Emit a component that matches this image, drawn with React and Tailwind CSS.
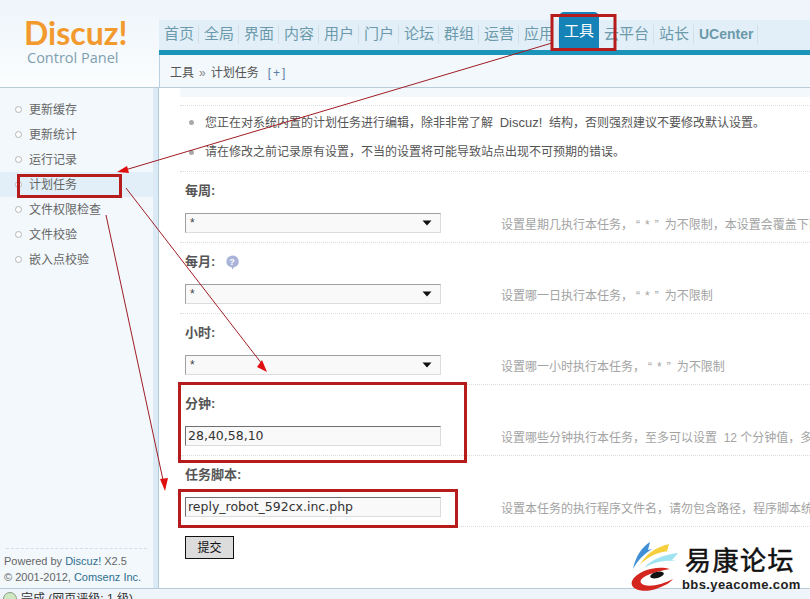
import React from "react";

const cjk = "font-['Liberation_Sans','Noto_Sans_CJK_SC',sans-serif]";

const navItems = ["首页", "全局", "界面", "内容", "用户", "门户", "论坛", "群组", "运营", "应用"];
const sideItems = ["更新缓存", "更新统计", "运行记录", "计划任务", "文件权限检查", "文件校验", "嵌入点校验"];

function Caret() {
  return (
    <svg width="10" height="6" viewBox="0 0 10 6" className="shrink-0">
      <path d="M0.5 0.5h9L5 5.5z" fill="#111" />
    </svg>
  );
}

function Star() {
  return <span className="pl-[3px] pr-[1px] tracking-[5px]">“*”</span>;
}

// fake select / text input, same box for both
function Field({ value, select, dark }) {
  return (
    <div
      className={`flex h-5 w-[256px] shrink-0 items-center justify-between border border-r-[#dcdcdc] border-b-[#dcdcdc] bg-[#f9f9f9] pr-2 ${
        dark
          ? "border-t-[#707070] border-l-[#707070] pl-[2px] pt-[1px] font-['DejaVu_Sans',sans-serif] text-[12.5px] text-[#333]"
          : "border-t-[#a0a0a0] border-l-[#a0a0a0] pl-1 text-xs text-[#444]"
      }`}
    >
      <span>{value}</span>
      {select && <Caret />}
    </div>
  );
}

function Row({ label, hint, value, select, dark, help }) {
  return (
    <div className="flex h-[71px] flex-col border-b border-dotted border-[#d5dde2] pl-[5px] pt-[10px]">
      <div className="flex h-[18px] items-center gap-[10px] text-[13px] font-bold text-[#555]">
        {label}
        {help && (
          <svg width="14" height="15" viewBox="0 0 14 15">
            <path d="M7 0.5a6.5 6 0 0 1 2.5 11.6L7 14.5v-2.1A6.5 6 0 0 1 7 0.5z" fill="#aab4da" />
            <text x="7" y="10" textAnchor="middle" fontSize="9" fontWeight="700" fill="#fff">?</text>
          </svg>
        )}
      </div>
      <div className="mt-[13px] flex items-center">
        <Field value={value} select={select} dark={dark} />
        <span className="ml-[60px] whitespace-nowrap pt-1 text-xs text-[#a3a3a3]">{hint}</span>
      </div>
    </div>
  );
}

function Overlay() {
  const red = "#b71c1c";
  return (
    <svg className="pointer-events-none absolute inset-0" width="810" height="599" viewBox="0 0 810 599">
      <g fill="none" stroke={red} strokeWidth="3">
        <rect x="552" y="15.5" width="63" height="34" />
        <rect x="18.5" y="175.5" width="102" height="21" />
        <rect x="179.5" y="383.5" width="286" height="78" />
        <rect x="179.5" y="490.5" width="277" height="36" />
      </g>
      <g stroke="#a01c24" strokeWidth="1" fill="none">
        <path d="M552 43L125 170" />
        <path d="M126 188L262 364" />
        <path d="M106 215L163 480" />
      </g>
      <g fill="#e00f0f">
        <path d="M117 172l10-6 2 7z" />
        <path d="M267 372l-10-5 5-7z" />
        <path d="M165 491l-5-12 8-1z" />
      </g>
    </svg>
  );
}

function Watermark() {
  return (
    <div className="absolute left-[630px] top-[540px] flex h-[52px] w-[175px]">
      <svg width="52" height="52" viewBox="0 0 52 52" className="shrink-0">
        <path d="M3 29C6 16 11 8 20 2l-2 8 4-1C14 14 8 20 3 29z" fill="#3f8fd6" />
        <path d="M10 25C16 14 24 8 39 4l-2 7 3 0C28 12 18 16 10 25z" fill="#f7cf3c" />
        <path d="M14 28C22 19 33 15 48 13l-6 7 4 1C34 20 24 22 14 28z" fill="#9fe2f2" />
        <path d="M40 29C28 25 7 30 2 41C-1 50 14 53 26 49C34 46 40 43 43 39C34 44 16 49 11 43C8 37 24 32 40 29z" fill="#d4261f" />
        <ellipse cx="27" cy="35" rx="7" ry="3" fill="#111" transform="rotate(-14 27 35)" />
      </svg>
      <div className="ml-0 flex flex-col">
        <span className="ml-[3px] mt-[6px] text-[26px] font-normal leading-[30px] tracking-[1.5px] text-[#111] [-webkit-text-stroke:0.5px_#111]">易康论坛</span>
        <span className="mt-[1px] text-[13px] font-bold leading-[15px] tracking-[0.4px] text-[#222]">bbs.yeacome.com</span>
      </div>
    </div>
  );
}

export default function App() {
  return (
    <div className={`relative flex h-[599px] w-[810px] flex-col overflow-hidden bg-white ${cjk}`}>
      {/* header */}
      <div className="flex h-[88px] shrink-0 border-b border-[#b8ccd8]">
        <div className="flex w-[159px] shrink-0 flex-col bg-gradient-to-b from-[#eef5fb] to-[#fbfdfe] pl-[24px]">
          <div className="mt-[18px] font-['Lato',sans-serif] text-[32px] font-bold leading-[29px] text-[#f29a2e]">Discuz!</div>
          <div className="ml-[3px] mt-[2px] font-['Open_Sans',sans-serif] text-[14.5px] leading-[18px] text-[#7f9fb0]">Control Panel</div>
        </div>
        <div className="flex min-w-0 flex-1 flex-col">
          <div className="flex h-[50px] items-end whitespace-nowrap bg-gradient-to-b from-[#eff5fb] from-40% to-[#e2eff8] to-40% pb-[2px] pl-[5px]">
            {navItems.map((t) => (
              <div key={t} className="flex h-7 w-10 items-center">
                <span className="flex h-[19px] w-[35px] items-center border-r border-[#d3e0e8] text-[15px] text-[#6c9aaa]">{t}</span>
              </div>
            ))}
            <div className="-mb-[2px] ml-[-5px] mr-[5px] flex h-[38px] w-10 items-center justify-center rounded-t-[5px] bg-[#1583b8] text-[15px] text-white">工具</div>
            <div className="flex h-7 w-[55px] items-center">
              <span className="flex h-[19px] w-[50px] items-center border-r border-[#d3e0e8] text-[15px] text-[#6c9aaa]">云平台</span>
            </div>
            <div className="flex h-7 w-10 items-center">
              <span className="flex h-[19px] w-[35px] items-center border-r border-[#d3e0e8] text-[15px] text-[#6c9aaa]">站长</span>
            </div>
            <div className="flex h-7 items-center">
              <span className="flex h-[19px] items-center border-r border-[#d3e0e8] pr-1 text-[14px] font-bold text-[#6c9aaa]">UCenter</span>
            </div>
          </div>
          <div className="h-[5px] bg-[#1a94b8]" />
          <div className="flex flex-1 items-center border-l border-[#b8d0e0] bg-[#f2f8fc] pl-[10px] pt-1 text-xs text-[#555]">
            工具<span className="mx-[5px] text-[#888]">»</span>计划任务
            <span className="ml-[9px] tracking-[2px] text-[#5a7fa5]">[+]</span>
          </div>
        </div>
      </div>

      {/* body */}
      <div className="flex min-h-0 flex-1">
        <div className="flex w-[153px] shrink-0 flex-col bg-[#f2f8fc] pt-[9px]">
          {sideItems.map((t) => (
            <div key={t} className={`flex h-[25px] items-center pl-[15px] text-xs text-[#666] ${t === "计划任务" ? "bg-[#e2eff8] text-[#2c6a94]" : ""}`}>
              <span className="mr-[7px] h-[7px] w-[7px] rounded-full border border-[#b5b5b5] bg-white" />
              {t}
            </div>
          ))}
          <div className="mx-[6px] mt-auto border-t border-dashed border-[#d5dde2]" />
          <div className="mb-[3px] pl-1 pt-[4px] text-[11px] leading-4 text-[#666]">
            <div>Powered by <span className="text-[#2e6e8e]">Discuz!</span> X2.5</div>
            <div>© 2001-2012, <span className="text-[#2e6e8e]">Comsenz Inc.</span></div>
          </div>
        </div>
        <div className="w-[6px] shrink-0 border-r border-[#b0cde0] bg-[#dceaf6]" />
        <div className="min-w-0 flex-1 overflow-hidden pl-[21px]">
          <div className="h-[9px] bg-[#f3f8fc]" />
          <div className="flex h-[9px] border-b border-dotted border-[#d5dde2]" />
          <div className="flex h-[66px] flex-col justify-center gap-[13px] border-b border-dotted border-[#d5dde2] pb-[3px] text-xs text-[#555]">
            <div className="flex items-center whitespace-nowrap pl-[9px]">
              <span className="mr-[11px] h-[5px] w-[5px] rounded-full bg-[#aaa]" />
              <span>您正在对系统内置的计划任务进行编辑，除非非常了解&nbsp;&nbsp;<span className="text-[13px]">Discuz!</span>&nbsp;&nbsp;结构，否则强烈建议不要修改默认设置。</span>
            </div>
            <div className="flex items-center whitespace-nowrap pl-[9px]">
              <span className="mr-[11px] h-[5px] w-[5px] rounded-full bg-[#aaa]" />
              请在修改之前记录原有设置，不当的设置将可能导致站点出现不可预期的错误。
            </div>
          </div>
          <Row label="每周:" value="*" select hint={<>设置星期几执行本任务，<Star />为不限制，本设置会覆盖下面的“日”设定</>} />
          <Row label="每月:" help value="*" select hint={<>设置哪一日执行本任务，<Star />为不限制</>} />
          <Row label="小时:" value="*" select hint={<>设置哪一小时执行本任务，<Star />为不限制</>} />
          <Row label="分钟:" value="28,40,58,10" dark hint={<>设置哪些分钟执行本任务，至多可以设置&nbsp;&nbsp;12&nbsp;个分钟值，多个值之间用半角逗号隔开</>} />
          <Row label="任务脚本:" value="reply_robot_592cx.inc.php" dark hint="设置本任务的执行程序文件名，请勿包含路径，程序脚本统一存放于目录中" />
          <button className="ml-[5px] mt-[9px] h-[23px] w-[49px] border border-[#111] bg-[#dcdcdc] text-xs text-[#111]">提交</button>
        </div>
      </div>

      {/* browser status bar */}
      <div className="flex h-[11px] shrink-0 items-start overflow-hidden border-t border-[#b8ccd8] bg-[#eef4f9] pl-[3px] pt-[2px] text-xs leading-4 text-[#333]">
        <span className="mr-[4px] mt-[1px] h-[14px] w-[14px] shrink-0 rounded-full border border-[#8a9a8a] bg-[#cfe8c0]" />
        完成 (网页评级: 1 级)
      </div>

      <Watermark />
      <Overlay />
    </div>
  );
}
